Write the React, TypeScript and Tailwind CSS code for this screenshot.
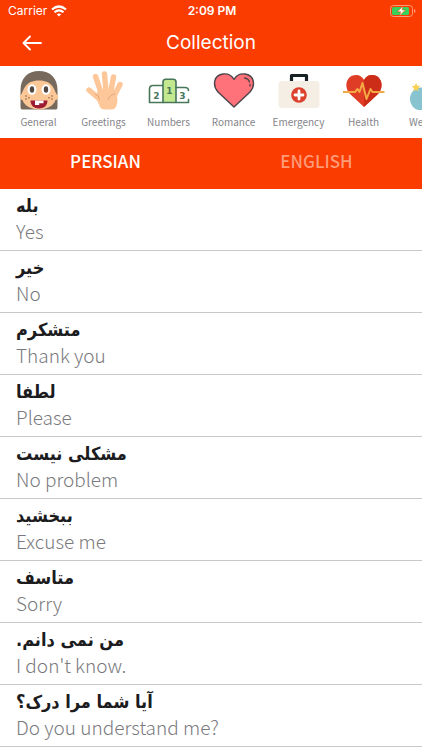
import React from "react";

const categories = [
  { label: "General", icon: <FaceIcon /> },
  { label: "Greetings", icon: <HandIcon /> },
  { label: "Numbers", icon: <PodiumIcon /> },
  { label: "Romance", icon: <HeartIcon /> },
  { label: "Emergency", icon: <KitIcon /> },
  { label: "Health", icon: <PulseIcon /> },
  { label: "Weather", icon: <MoonIcon /> },
];

const phrases = [
  ["بله", "Yes"],
  ["خیر", "No"],
  ["متشکرم", "Thank you"],
  ["لطفا", "Please"],
  ["مشکلی نیست", "No problem"],
  ["ببخشید", "Excuse me"],
  ["متاسف", "Sorry"],
  ["من نمی دانم.", "I don't know."],
  ["آیا شما مرا درک؟", "Do you understand me?"],
];

function FaceIcon() {
  return (
    <svg viewBox="0 0 40 40" className="size-10">
      <path d="M3 39.500Q1.500 39.500 1.500 36V20C1.500 8 9 1 20 1s18.500 7 18.500 19v16q0 3.500-1.500 3.500z" fill="#776a5c" />
      <path d="M2.500 24C5 20 6 10.500 20 10.500S35 20 37.500 24c3 2 1.500 6-1 6-2 6-9 9.500-16.500 9.500S5.500 36 3.500 30c-2.500 0-4-4-1-6z" fill="#fcc797" />
      <ellipse cx="13" cy="19.500" rx="4.500" ry="5.200" fill="#fff" />
      <ellipse cx="27" cy="19.500" rx="4.500" ry="5.200" fill="#fff" />
      <ellipse cx="13" cy="19.500" rx="2.200" ry="3.200" fill="#534741" />
      <ellipse cx="27" cy="19.500" rx="2.200" ry="3.200" fill="#534741" />
      <path d="M11.500 30.500h17c0 5-3.500 8-8.500 8s-8.500-3-8.500-8z" fill="#9c1d33" />
      <path d="M16 30.500h4.200v4.500H16zM20 30.500h4.500v2.700H20z" fill="#fff" />
      <g fill="#8a5f43">
        <circle cx="7" cy="26" r=".8" /><circle cx="10" cy="27.700" r=".8" /><circle cx="7" cy="29" r=".8" />
        <circle cx="33" cy="26" r=".8" /><circle cx="30" cy="27.700" r=".8" /><circle cx="33" cy="29" r=".8" />
      </g>
    </svg>
  );
}

function HandIcon() {
  return (
    <svg viewBox="0 0 40 40" className="size-10">
      <g stroke="#fdc799" strokeWidth="5.400" strokeLinecap="round" strokeLinejoin="round" fill="none">
        <path d="M11.500 6.500l5.500 16M20.500 4l1.500 17M29.500 7l-3 16M36 14.500L30 26M5 20l11.500 10" />
      </g>
      <path d="M14 18c5 2 10 2 16 1l3 6q1 5 0 9-1 5.500-6 5.500h-6q-5 0-6-5L12 28z" fill="#fdc799" />
      <path d="M11 24q4 1 4.500 5.500M31 24q-5 .5-7 6" stroke="#dda27c" strokeWidth=".9" fill="none" />
    </svg>
  );
}

function PodiumIcon() {
  return (
    <svg viewBox="0 0 42 40" className="h-10 w-[42px]">
      <g stroke="#47765a" strokeWidth="1.600" strokeLinejoin="round" strokeLinecap="round">
        <path d="M15 32.500H1.500V19q0-3.500 3.500-3.500h10" fill="#fff" />
        <path d="M15 32.500V12q0-2.700 2.700-2.700h7.600Q28 9.300 28 12v20.500z" fill="#c3e890" />
        <path d="M28 32.500h12.500v-3M28 17.500h9q3.500 0 3.500 3" fill="none" />
      </g>
      <g fill="#47765a" fontFamily="DejaVu Sans" fontSize="9" fontWeight="700" textAnchor="middle">
        <text x="8.500" y="28.500">2</text><text x="21.500" y="23.500">1</text><text x="34.500" y="28.500">3</text>
      </g>
    </svg>
  );
}

function HeartIcon() {
  return (
    <svg viewBox="0 0 42 40" className="h-10 w-[42px]">
      <path d="M21 37L5 22C-1 15 1 5 10 4c5-.6 9 2 11 5.500C23 6 27 3.400 32 4c9 1 11 11 5 18z" fill="#ff727a" stroke="#4b4349" strokeWidth="1.400" strokeLinejoin="round" />
      <path d="M31.500 8q4 .5 5 4M37 14.500v1.500" fill="none" stroke="#4b4349" strokeWidth="1.300" strokeLinecap="round" />
    </svg>
  );
}

function KitIcon() {
  return (
    <svg viewBox="0 0 42 40" className="h-10 w-[42px]">
      <path d="M13.500 12V5.500h15V12" fill="none" stroke="#172126" strokeWidth="3.200" strokeLinejoin="round" />
      <rect x=".5" y="11" width="41" height="27" rx="3.500" fill="#f5eee5" />
      <circle cx="21" cy="25" r="7.800" fill="#db412d" />
      <path d="M21 21v8M17 25h8" stroke="#fff" strokeWidth="2.800" strokeLinecap="round" />
    </svg>
  );
}

function PulseIcon() {
  return (
    <svg viewBox="0 0 42 40" className="h-10 w-[42px]">
      <path d="M21 37L7 24C0 16 4 5 13 5c4 0 6.500 2 8 5 1.500-3 4-5 8-5 9 0 13 11 6 19z" fill="#e03d26" />
      <path d="M21 37V10c1.500-3 4-5 8-5 9 0 13 11 6 19z" fill="#cb2d19" />
      <path d="M0 22h12l2.500-3 2 3 3-9 4 16 4-10 2 3h12" fill="none" stroke="#f5a944" strokeWidth="2" strokeLinejoin="round" />
    </svg>
  );
}

function MoonIcon() {
  return (
    <svg viewBox="0 0 42 40" className="h-10 w-[42px]">
      <circle cx="13.500" cy="29" r="11.500" fill="#88c3d0" />
      <path d="M8 13l1.300 2.700 3 .4-2.200 2.100.5 3L8 19.800l-2.600 1.400.5-3-2.200-2.100 3-.4z" fill="#fbd153" />
    </svg>
  );
}

function StatusBar() {
  return (
    <div className="grid h-[22px] grid-cols-3 items-center pr-1.5 pl-2 font-['Inter',sans-serif] text-xs text-white">
      <div className="flex items-center gap-1">
        <span>Carrier</span>
        <svg viewBox="0 0 16 12" className="h-3 w-4" fill="none" stroke="#fff" strokeWidth="2.200">
          <path d="M1 4.500q7-6 14 0M3.500 7.300q4.500-4 9 0" />
          <path d="M5.800 9.300q2.200-1.800 4.400 0L8 11.600z" fill="#fff" stroke="none" />
        </svg>
      </div>
      <span className="text-center font-semibold">2:09 PM</span>
      <svg viewBox="0 0 26 12" className="h-3 w-[26px] justify-self-end">
        <rect x=".5" y=".5" width="22" height="11" rx="3" fill="none" stroke="#ff9b78" />
        <rect x="2" y="2" width="17" height="8" rx="1.500" fill="#38d15b" />
        <path d="M24 4v4q1.500-.5 1.500-2T24 4z" fill="#ff9b78" />
        <path d="M13 1L7.500 6.700h3.300L9.500 11l5.700-6H12z" fill="#fff" stroke="#f93b00" strokeWidth=".5" />
      </svg>
    </div>
  );
}

export default function App() {
  return (
    <div className="min-h-screen w-full overflow-x-hidden bg-white font-['Noto_Sans_CJK_SC',sans-serif]">
      <header className="bg-[#fb3c00]">
        <StatusBar />
        <div className="grid h-11 grid-cols-[64px_1fr_64px] items-center pb-0.5">
          <button type="button" aria-label="Back" className="flex justify-center">
            <svg viewBox="0 0 20 16" className="h-4 w-5" fill="none" stroke="#fff" strokeWidth="1.900" strokeLinecap="round" strokeLinejoin="round">
              <path d="M19 8H1.500M8 1.500L1.500 8 8 14.500" />
            </svg>
          </button>
          <h1 className="text-center font-['Inter',sans-serif] text-[19px] leading-6 text-white">Collection</h1>
        </div>
      </header>
      <nav aria-label="Categories" className="flex h-[72px] overflow-x-auto pl-1.5 [scrollbar-width:none]">
        {categories.map(({ label, icon }) => (
          <button key={label} type="button" className="flex w-[65px] shrink-0 flex-col items-center gap-1 pt-1">
            {icon}
            <span className="text-[10px] leading-4 text-[#85858a]">{label}</span>
          </button>
        ))}
      </nav>
      <div role="tablist" className="grid h-[51px] grid-cols-2 bg-[#fb3c00] pb-1.5 text-[17px] font-medium text-white">
        <button type="button" role="tab" aria-selected="true">PERSIAN</button>
        <button type="button" role="tab" aria-selected="false" className="text-[#ff9b78]">ENGLISH</button>
      </div>
      <ul>
        {phrases.map(([persian, english]) => (
          <li key={english} className="h-[62px] border-b border-[#c8c8c8] px-4 pt-[5px]">
            <p dir="rtl" lang="fa" className="text-left font-['DejaVu_Sans_Condensed','DejaVu_Sans',sans-serif] text-lg leading-6 font-bold text-[#1c1c1e]">{persian}</p>
            <p className="text-[19px] leading-[26px] font-light text-[#7a7a7e]">{english}</p>
          </li>
        ))}
      </ul>
    </div>
  );
}
